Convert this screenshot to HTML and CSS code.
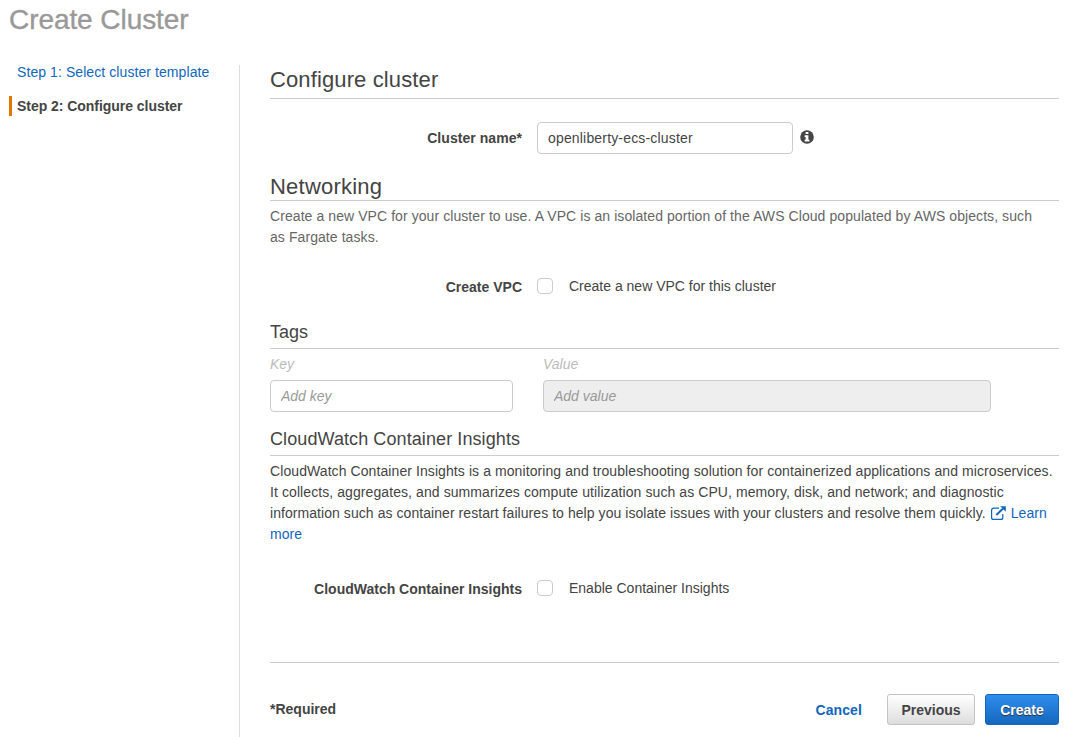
FILE: index.html
```html
<!DOCTYPE html>
<html lang="en">
<head>
<meta charset="utf-8">
<title>Create Cluster</title>
<link rel="stylesheet" href="styles.css">
</head>
<body>
<h1 class="page-title">Create Cluster</h1>
<div class="layout">
  <nav class="steps">
    <a class="step step-link">Step 1: Select cluster template</a>
    <span class="step step-current">Step 2: Configure cluster</span>
  </nav>
  <main class="content">
    <h2 class="heading heading-configure">Configure cluster</h2>
    <div class="row row-name">
      <label class="label" for="name">Cluster name*</label>
      <input class="input input-name" id="name" type="text" value="openliberty-ecs-cluster">
      <svg class="info" viewBox="0 0 14 14"><circle cx="7" cy="7" r="6.8" fill="#444"/><path fill="#fff" d="M5.600 2h2.800v2.100H5.600zM4.600 5.200h3.800v4.500h1v1.700H4.600V9.700h1V6.900h-1z"/></svg>
    </div>
    <h2 class="heading heading-networking">Networking</h2>
    <p class="text text-muted">Create a new VPC for your cluster to use. A VPC is an isolated portion of the AWS Cloud populated by AWS objects, such<br>as Fargate tasks.</p>
    <div class="row row-vpc">
      <span class="label label-check">Create VPC</span>
      <input class="check" id="vpc" type="checkbox">
      <label class="option" for="vpc">Create a new VPC for this cluster</label>
    </div>
    <h3 class="heading heading-tags">Tags</h3>
    <div class="tags">
      <div class="tag-key"><label class="tag-label" for="key">Key</label><input class="input" id="key" type="text" placeholder="Add key"></div>
      <div class="tag-value"><label class="tag-label" for="value">Value</label><input class="input" id="value" type="text" placeholder="Add value" disabled></div>
    </div>
    <h3 class="heading heading-insights">CloudWatch Container Insights</h3>
    <p class="text text-insights">CloudWatch Container Insights is a monitoring and troubleshooting solution for containerized applications and microservices.<br>It collects, aggregates, and summarizes compute utilization such as CPU, memory, disk, and network; and diagnostic<br><span class="last-line">information such as container restart failures to help you isolate issues with your clusters and resolve them quickly.</span> <a class="link"><svg class="external" viewBox="0 0 15 14"><path d="M8 2.200H2.600a2 2 0 0 0-2 2v7.200a2 2 0 0 0 2 2h7.200a2 2 0 0 0 2-2V8" fill="none" stroke="currentColor" stroke-width="1.200"/><path d="M5.300 9L12 2.600" stroke="currentColor" stroke-width="2"/><path d="M9.200.200h5.600v5.600z" fill="currentColor"/></svg> Learn<br>more</a></p>
    <div class="row row-insights">
      <span class="label label-check">CloudWatch Container Insights</span>
      <input class="check" id="insights" type="checkbox">
      <label class="option" for="insights">Enable Container Insights</label>
    </div>
    <footer class="footer">
      <span class="required">*Required</span>
      <a class="cancel">Cancel</a>
      <button class="button button-previous">Previous</button>
      <button class="button button-create">Create</button>
    </footer>
  </main>
</div>
</body>
</html>
```
FILE: styles.css
```css
* { box-sizing: border-box; }
body {
  margin: 0;
  height: 737px;
  overflow: hidden;
  background: #fff;
  color: #444;
  font: 14px/21px "Liberation Sans", Arial, sans-serif;
}
h1, h2, h3, p { margin: 0; }
.page-title {
  height: 65px;
  padding: 3px 0 0 9px;
  color: #999;
  font-size: 28px;
  line-height: 34px;
  font-weight: 400;
  letter-spacing: -0.07px;
  -webkit-text-stroke: 0.35px #999;
}
.layout { display: flex; height: 672px; }
.steps {
  display: flex;
  flex-direction: column;
  gap: 14px;
  width: 240px;
  padding-left: 9px;
  border-right: 1px solid #ddd;
}
.step { height: 20px; line-height: 20px; padding-left: 8px; white-space: nowrap; }
.step-link { margin-top: -3px; color: #1166bb; letter-spacing: 0.08px; }
.step-current {
  padding-left: 5px;
  border-left: 3px solid #e07700;
  font-weight: 700;
  letter-spacing: -0.04px;
}
.content { width: 819px; padding-left: 30px; white-space: nowrap; }
.heading { border-bottom: 1px solid #ccc; font-weight: 400; }
.heading-configure { height: 34px; font-size: 22px; line-height: 29px; letter-spacing: 0.12px; }
.heading-networking { height: 30px; font-size: 22px; line-height: 32px; letter-spacing: 0.22px; }
.heading-tags, .heading-insights { height: 31px; font-size: 18px; line-height: 29px; }
.heading-insights { margin-top: 13px; letter-spacing: 0.09px; }
.row { display: flex; align-items: center; }
.row-name { height: 32px; margin: 23px 0 17px; }
.label {
  width: 252px;
  margin-right: 15px;
  text-align: right;
  font-weight: 700;
  letter-spacing: 0.05px;
}
.label-check { padding-top: 2px; letter-spacing: 0; }
.input {
  display: block;
  width: 100%;
  height: 32px;
  padding: 0 10px;
  border: 1px solid #ccc;
  border-radius: 4px;
  background: #fff;
  color: #444;
  font: 14px "Liberation Sans", Arial, sans-serif;
}
.input::placeholder { color: #999; font-style: italic; }
.input:disabled { background: #eee; }
.input-name { width: 256px; letter-spacing: 0.17px; }
.info { width: 14px; height: 14px; margin: 0 0 2px 7px; }
.text { margin-top: 5px; }
.text-muted { color: #666; letter-spacing: 0.076px; }
.text-insights { letter-spacing: 0.084px; }
.last-line { letter-spacing: 0.06px; }
.check {
  appearance: none;
  width: 16px;
  height: 16px;
  margin: 0 16px 0 0;
  border: 1px solid #ccc;
  border-radius: 4px;
  background: #fff;
}
.row-vpc { height: 16px; margin: 30px 0 24px; }
.tags { display: flex; gap: 30px; padding-top: 5px; }
.tag-key { width: 243px; }
.tag-value { width: 448px; }
.tag-label { display: block; height: 26px; color: #bbb; font-style: italic; }
.link { color: #1166bb; }
.external { width: 15px; height: 14px; vertical-align: -2px; margin: 0 1px; }
.row-insights { height: 16px; margin: 35px 0 66px; }
.footer {
  display: flex;
  align-items: center;
  padding-top: 31px;
  border-top: 1px solid #ccc;
  font-weight: 700;
}
.required { margin-right: auto; }
.cancel { margin-right: 25px; padding-top: 2px; color: #1166bb; letter-spacing: 0.1px; }
.button {
  height: 31px;
  padding: 0;
  border: 1px solid #c4c4c4;
  border-radius: 3px;
  font: 700 14px "Liberation Sans", Arial, sans-serif;
}
.button-previous { width: 88px; color: #444; background: linear-gradient(#fff, #ddd); }
.button-create {
  width: 74px;
  margin-left: 10px;
  border-color: #1166bb;
  color: #fff;
  background: linear-gradient(#2f8ded, #1467bd);
  text-shadow: 0 1px 1px #333;
}
```
